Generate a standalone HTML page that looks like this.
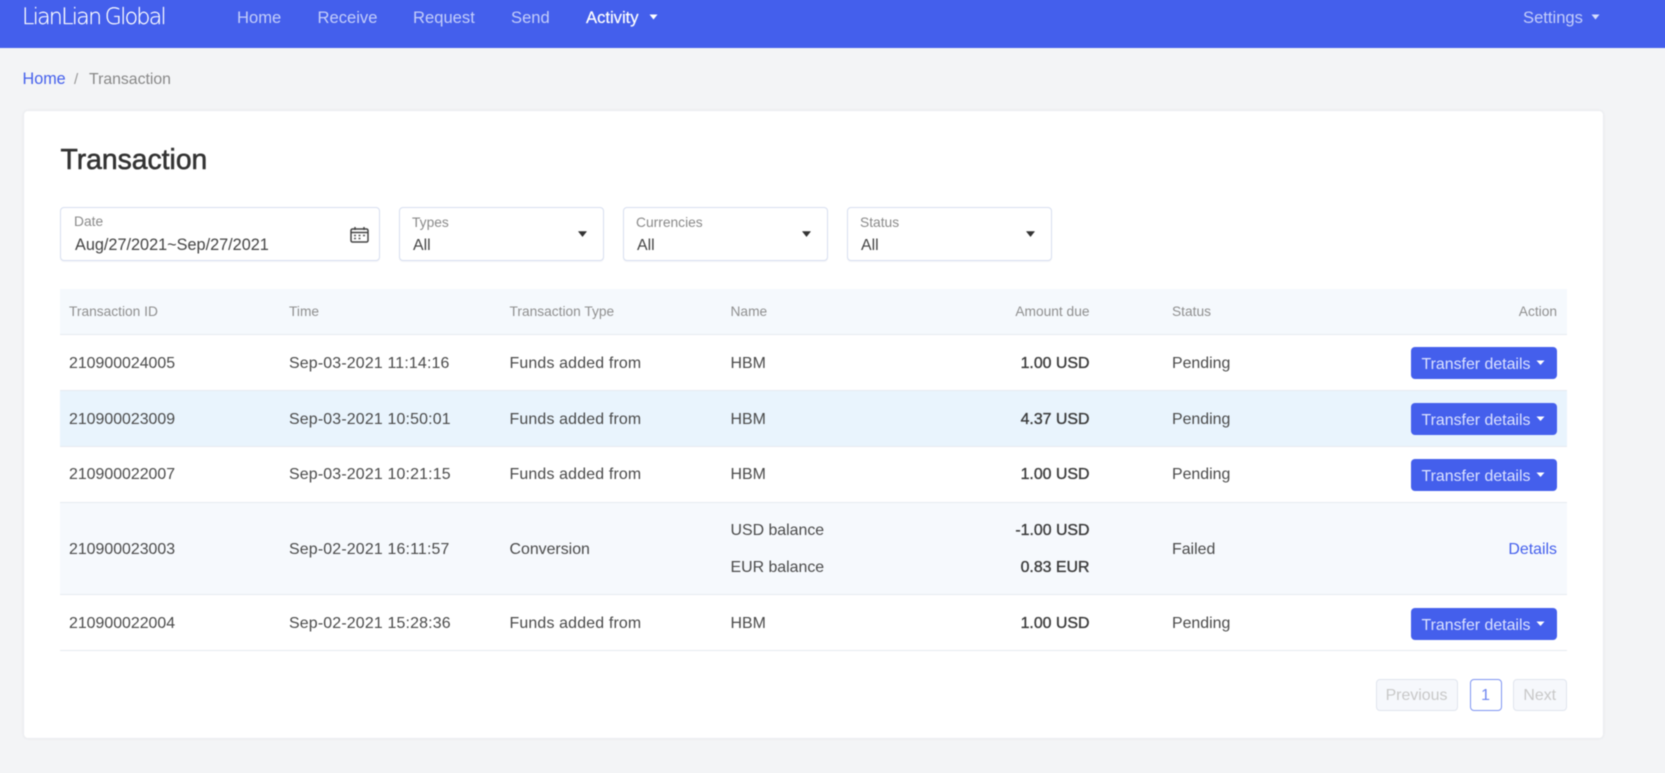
<!DOCTYPE html>
<html><head><meta charset="utf-8"><title>Transaction</title>
<style>
html,body{margin:0;padding:0;width:1665px;height:773px;overflow:hidden;background:#f3f4f6}
#c{position:relative;width:1665px;height:773px;overflow:hidden}
#w{position:absolute;left:-6px;top:-6px;width:1677px;height:785px;overflow:hidden;filter:blur(.4px);background:#f3f4f6;font-family:"Liberation Sans",sans-serif;color:#4a4a4a;font-size:15.9px}
#i{position:absolute;left:6px;top:6px;width:1665px;height:773px}
#i div,#i svg{position:absolute}
.t{position:absolute;line-height:20px;height:20px;white-space:nowrap}
.r{text-align:right}
.box{background:#fff;border:1px solid #d8dff0;border-radius:4px;box-sizing:border-box;top:207px;height:54px;box-shadow:0 1px 1px rgba(40,50,90,.05)}
.lb{font-size:13.8px;color:#8a8a8a}
.row{left:60px;width:1507px;box-sizing:border-box;border-bottom:1px solid #e6eaf0}
.h{font-size:13.75px;color:#8f8f8f;top:302px}
.b{-webkit-text-stroke:.35px #3a3a3a;color:#3a3a3a}
.s{letter-spacing:.18px}
.btn{left:1411px;width:146px;height:32px;background:#445fec;border-radius:4px}
.bt{left:1421.5px;color:#dbe2ff;font-size:15.9px}
.n{color:#c3cdfa;font-size:16.6px;top:8px}
.pg{top:679px;height:32px;box-sizing:border-box;border:1px solid #e0e5ee;border-radius:4px;background:#f6f8fc;color:#c8c8c8;text-align:center;line-height:31px;font-size:15.9px}
</style></head><body><div id="c"><div id="w"><div id="i">

<div style="left:-6px;top:-6px;width:1677px;height:54px;background:#445fec"></div>
<span class="t" style="left:22px;top:4.5px;height:26px;line-height:26px;font-family:'DejaVu Sans','Liberation Sans',sans-serif;font-weight:200;font-size:22px;color:#fff;letter-spacing:-1.65px;word-spacing:-1px;-webkit-text-stroke:.2px #fff">LianLian Global</span>
<span class="t n" style="left:237px">Home</span>
<span class="t n" style="left:317.5px">Receive</span>
<span class="t n" style="left:413px">Request</span>
<span class="t n" style="left:511px">Send</span>
<span class="t n" style="left:586px;color:#fff;-webkit-text-stroke:.2px #fff">Activity</span>
<svg style="left:649px;top:14px" width="9" height="6"><path d="M0.5 0.5H8.5L4.5 5.5Z" fill="#fff"/></svg>
<span class="t n" style="left:1523px">Settings</span>
<svg style="left:1591px;top:14px" width="9" height="6"><path d="M0.5 0.5H8.5L4.5 5.5Z" fill="#d5dcfc"/></svg>

<span class="t" style="left:22.5px;top:69px;color:#445fec;font-size:16.2px">Home</span>
<span class="t" style="left:74px;top:70px;color:#999;font-size:15.2px">/</span>
<span class="t" style="left:89px;top:70px;color:#888;font-size:15.8px">Transaction</span>

<div style="left:23.5px;top:110.5px;width:1579.5px;height:627.5px;background:#fff;border-radius:4px;box-shadow:0 0 3px rgba(40,50,90,.1)"></div>
<span class="t" style="left:60.5px;top:144px;height:30px;line-height:30px;font-size:28.3px;color:#333;-webkit-text-stroke:.55px #333">Transaction</span>

<div class="box" style="left:60px;width:320px"></div>
<span class="t lb" style="left:74px;top:212px">Date</span>
<span class="t" style="left:75px;top:234.5px;color:#444;font-size:16.25px">Aug/27/2021~Sep/27/2021</span>
<svg style="left:350px;top:226px" width="19" height="17" viewBox="0 0 19 17"><rect x="1" y="3" width="17" height="13" rx="1.5" fill="none" stroke="#444" stroke-width="1.5"/><path d="M1 6.5H18" stroke="#444" stroke-width="1.5"/><path d="M5 1V4M14 1V4" stroke="#444" stroke-width="1.5"/><path d="M4 9.5h2M8.5 9.5h2M13 9.5h2M4 12.5h2M8.5 12.5h2" stroke="#555" stroke-width="1.5"/></svg>

<div class="box" style="left:398.5px;width:205px"></div>
<span class="t lb" style="left:412px;top:213px">Types</span>
<span class="t" style="left:413px;top:236px;color:#444">All</span>
<svg style="left:578px;top:231px" width="9" height="6"><path d="M0.5 0.5H8.5L4.5 5.5Z" fill="#333" stroke="#333" stroke-width=".6" stroke-linejoin="round"/></svg>

<div class="box" style="left:622.5px;width:205px"></div>
<span class="t lb" style="left:636px;top:213px">Currencies</span>
<span class="t" style="left:637px;top:236px;color:#444">All</span>
<svg style="left:802px;top:231px" width="9" height="6"><path d="M0.5 0.5H8.5L4.5 5.5Z" fill="#333" stroke="#333" stroke-width=".6" stroke-linejoin="round"/></svg>

<div class="box" style="left:846.5px;width:205px"></div>
<span class="t lb" style="left:860px;top:213px">Status</span>
<span class="t" style="left:861px;top:236px;color:#444">All</span>
<svg style="left:1026px;top:231px" width="9" height="6"><path d="M0.5 0.5H8.5L4.5 5.5Z" fill="#333" stroke="#333" stroke-width=".6" stroke-linejoin="round"/></svg>

<div class="row" style="top:288.5px;height:46px;background:#f5f9fd"></div>
<div class="row" style="top:334.5px;height:56px;background:#fff"></div>
<div class="row" style="top:390.5px;height:56px;background:#e9f4fd"></div>
<div class="row" style="top:446.5px;height:56px;background:#fff"></div>
<div class="row" style="top:502.5px;height:92px;background:#f6f9fd"></div>
<div class="row" style="top:594.5px;height:56px;background:#fff"></div>

<span class="t h" style="left:69px">Transaction ID</span>
<span class="t h" style="left:289px">Time</span>
<span class="t h" style="left:509.5px">Transaction Type</span>
<span class="t h" style="left:730.5px">Name</span>
<span class="t h r" style="left:889.5px;width:200px">Amount due</span>
<span class="t h" style="left:1172px">Status</span>
<span class="t h r" style="left:1357px;width:200px">Action</span>

<span class="t" style="left:69px;top:354px">210900024005</span>
<span class="t s" style="left:289px;top:354px">Sep-03-2021 11:14:16</span>
<span class="t s" style="left:509.5px;top:354px">Funds added from</span>
<span class="t" style="left:730.5px;top:354px">HBM</span>
<span class="t r b" style="left:889.5px;width:200px;top:354px">1.00 USD</span>
<span class="t" style="left:1172px;top:354px">Pending</span>
<div class="btn" style="top:347px"></div>
<span class="t bt" style="top:354.5px">Transfer details</span>
<svg style="left:1535.5px;top:360px" width="9" height="6"><path d="M0.5 0.5H8.5L4.5 5Z" fill="#fff"/></svg>

<span class="t" style="left:69px;top:410px">210900023009</span>
<span class="t s" style="left:289px;top:410px">Sep-03-2021 10:50:01</span>
<span class="t s" style="left:509.5px;top:410px">Funds added from</span>
<span class="t" style="left:730.5px;top:410px">HBM</span>
<span class="t r b" style="left:889.5px;width:200px;top:410px">4.37 USD</span>
<span class="t" style="left:1172px;top:410px">Pending</span>
<div class="btn" style="top:403px"></div>
<span class="t bt" style="top:410.5px">Transfer details</span>
<svg style="left:1535.5px;top:416px" width="9" height="6"><path d="M0.5 0.5H8.5L4.5 5Z" fill="#fff"/></svg>

<span class="t" style="left:69px;top:465px">210900022007</span>
<span class="t s" style="left:289px;top:465px">Sep-03-2021 10:21:15</span>
<span class="t s" style="left:509.5px;top:465px">Funds added from</span>
<span class="t" style="left:730.5px;top:465px">HBM</span>
<span class="t r b" style="left:889.5px;width:200px;top:465px">1.00 USD</span>
<span class="t" style="left:1172px;top:465px">Pending</span>
<div class="btn" style="top:459px"></div>
<span class="t bt" style="top:466.5px">Transfer details</span>
<svg style="left:1535.5px;top:472px" width="9" height="6"><path d="M0.5 0.5H8.5L4.5 5Z" fill="#fff"/></svg>

<span class="t" style="left:69px;top:540px">210900023003</span>
<span class="t s" style="left:289px;top:540px">Sep-02-2021 16:11:57</span>
<span class="t" style="left:509.5px;top:540px">Conversion</span>
<span class="t" style="left:730.5px;top:521px">USD balance</span>
<span class="t" style="left:730.5px;top:557.5px">EUR balance</span>
<span class="t r b" style="left:889.5px;width:200px;top:521px">-1.00 USD</span>
<span class="t r b" style="left:889.5px;width:200px;top:557.5px">0.83 EUR</span>
<span class="t" style="left:1172px;top:540px">Failed</span>
<span class="t r" style="left:1357px;width:200px;top:540px;color:#445fec">Details</span>

<span class="t" style="left:69px;top:614px">210900022004</span>
<span class="t s" style="left:289px;top:614px">Sep-02-2021 15:28:36</span>
<span class="t s" style="left:509.5px;top:614px">Funds added from</span>
<span class="t" style="left:730.5px;top:614px">HBM</span>
<span class="t r b" style="left:889.5px;width:200px;top:614px">1.00 USD</span>
<span class="t" style="left:1172px;top:614px">Pending</span>
<div class="btn" style="top:608px"></div>
<span class="t bt" style="top:615.5px">Transfer details</span>
<svg style="left:1535.5px;top:621px" width="9" height="6"><path d="M0.5 0.5H8.5L4.5 5Z" fill="#fff"/></svg>

<div class="pg" style="left:1375.5px;width:82px">Previous</div>
<div class="pg" style="left:1469.5px;width:32px;background:#fff;border-color:#7f95f2;color:#6e86f0">1</div>
<div class="pg" style="left:1513px;width:53.5px">Next</div>

</div></div></div></body></html>
